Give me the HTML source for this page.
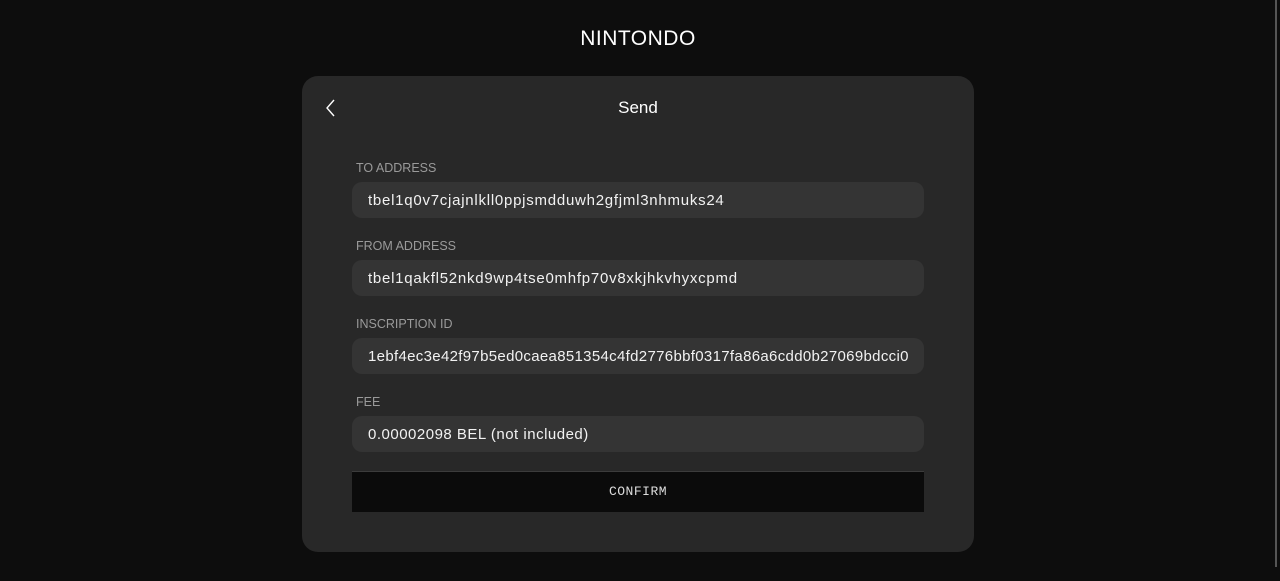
<!DOCTYPE html>
<html><head><style>
html,body{margin:0;padding:0;width:1280px;height:581px;background:#0d0d0d;overflow:hidden;font-family:"Liberation Sans",sans-serif;}
.title{position:absolute;left:0;width:1276px;top:27px;text-align:center;color:#fff;font-size:21px;letter-spacing:0.5px;}
.card{position:absolute;left:302px;top:76px;width:672px;height:476px;background:#282828;border-radius:16px;}
.hdr{position:absolute;top:22px;width:100%;text-align:center;color:#fff;font-size:17px;}
.back{position:absolute;left:20px;top:22px;}
.lbl{position:absolute;left:54px;color:#9a9a9a;font-size:12.5px;}
.inp{position:absolute;left:50px;width:572px;height:36px;background:#343434;border-radius:10px;color:#f2f2f2;font-size:15px;line-height:38px;padding-left:16px;box-sizing:border-box;white-space:nowrap;overflow:hidden;letter-spacing:0.75px;}
.btn{position:absolute;left:50px;top:395px;width:572px;height:41px;background:#0b0b0b;border-top:1px solid #3c3c3c;box-sizing:border-box;color:#ddd;font-family:"Liberation Mono",monospace;font-size:13px;text-align:center;line-height:39px;letter-spacing:0.5px;}
.sb{position:absolute;right:3px;top:0;width:2px;height:567px;background:#555;}
</style></head><body>
<div class="title">NINTONDO</div>
<div class="card">
<svg class="back" width="16" height="20" viewBox="0 0 16 20"><path d="M12 2 L5 10 L12 18" fill="none" stroke="#fff" stroke-width="1.4"/></svg>
<div class="hdr">Send</div>
<div class="lbl" style="top:85px">TO ADDRESS</div>
<div class="inp" style="top:106px">tbel1q0v7cjajnlkll0ppjsmdduwh2gfjml3nhmuks24</div>
<div class="lbl" style="top:163px">FROM ADDRESS</div>
<div class="inp" style="top:184px">tbel1qakfl52nkd9wp4tse0mhfp70v8xkjhkvhyxcpmd</div>
<div class="lbl" style="top:241px">INSCRIPTION ID</div>
<div class="inp" style="top:262px;letter-spacing:0.32px">1ebf4ec3e42f97b5ed0caea851354c4fd2776bbf0317fa86a6cdd0b27069bdcci0</div>
<div class="lbl" style="top:319px">FEE</div>
<div class="inp" style="top:340px;letter-spacing:0.5px">0.00002098 BEL (not included)</div>
<div class="btn">CONFIRM</div>
</div>
<div class="sb"></div>
</body></html>
